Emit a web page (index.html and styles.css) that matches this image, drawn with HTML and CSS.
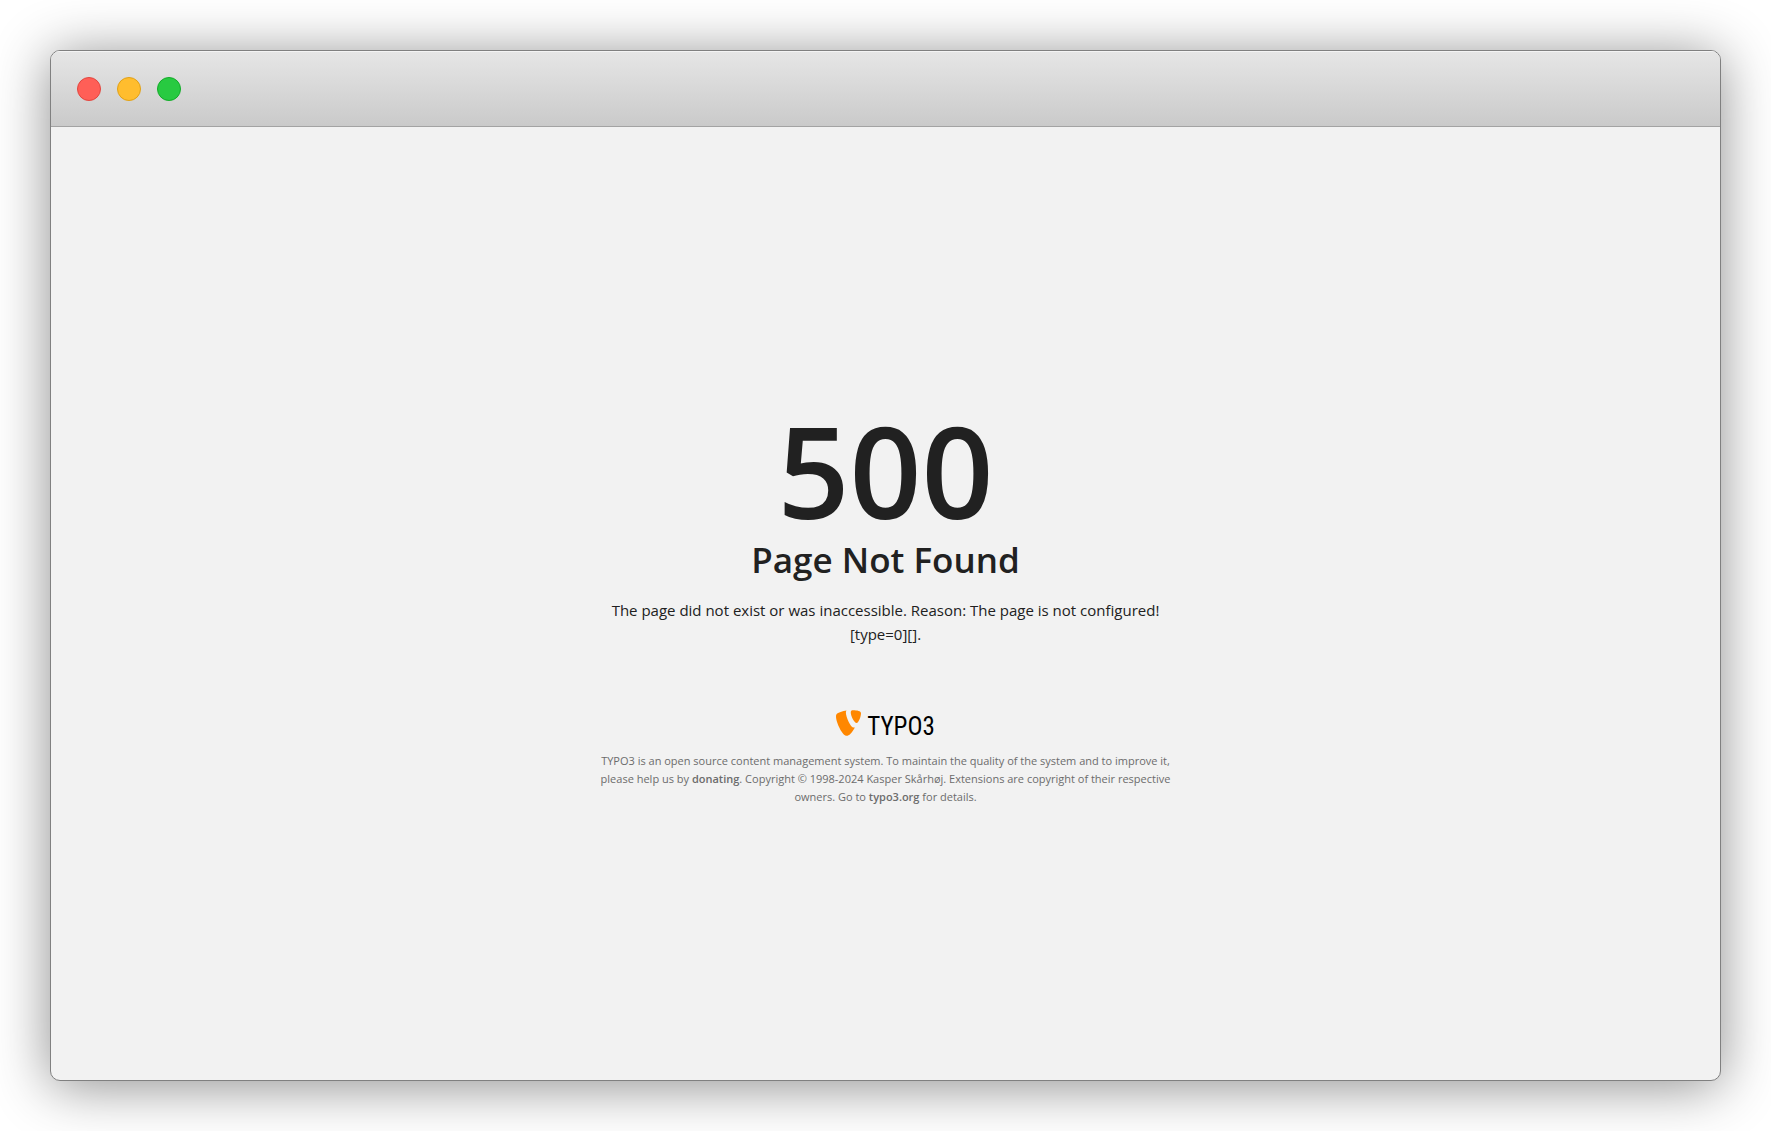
FILE: index.html
```html
<!DOCTYPE html>
<html lang="en">
<head>
    <meta charset="UTF-8">
    <meta name="viewport" content="width=device-width, initial-scale=1.0">
    <title>Page Not Found</title>
    <link rel="stylesheet" href="styles.css">
</head>
<body>

<div class="window">
    <!-- Title bar with the window controls -->
    <header class="titlebar">
        <button type="button" class="control close" aria-label="Close"></button>
        <button type="button" class="control minimize" aria-label="Minimize"></button>
        <button type="button" class="control zoom" aria-label="Zoom"></button>
    </header>

    <main class="page">
        <div class="error">
            <div class="error-code">500</div>
            <h1 class="error-title">Page Not Found</h1>
            <p class="error-message">The page did not exist or was inaccessible. Reason: The page is not configured! [type=0][].</p>

            <footer class="footer">
                <div class="logo">
                    <svg class="logo-mark" viewBox="0.6 0.7 13.9 14.3" aria-hidden="true">
                        <path fill="#ff8700" d="M11.1 10.3c-.2 0-.4.1-.6.1-1.8 0-4.4-6.2-4.4-8.3 0-.8.2-1 .4-1.2-2.2.3-4.8 1.1-5.6 2.1-.2.2-.3.6-.3 1.2C.6 7.4 4.1 15 6.6 15c1.1 0 3-1.8 4.5-4.7M10.1.7c2.2 0 4.4.4 4.4 1.6 0 2.5-1.6 5.6-2.4 5.6-1.4 0-3.3-4-3.3-6 0-.9.4-1.2 1.3-1.2"/>
                    </svg>
                    <span class="logo-name">TYPO3</span>
                </div>
                <p class="footer-text">TYPO3 is an open source content management system. To maintain the quality of the system and to improve it, please help us by <a href="#donate">donating</a>. Copyright © 1998-2024 Kasper Skårhøj. Extensions are copyright of their respective owners. Go to <a href="#typo3">typo3.org</a> for details.</p>
            </footer>
        </div>
    </main>
</div>

</body>
</html>
```
FILE: styles.css
```css
* {
    box-sizing: border-box;
}

body {
    margin: 0;
    padding: 50px;
    min-height: 100vh;
    display: flex;
    background: #fff;
    color: #212121;
    font-family: "Segoe UI", "Open Sans", sans-serif;
}

/* Window frame */
.window {
    flex: 1;
    display: flex;
    flex-direction: column;
    border: 1px solid #808080;
    border-radius: 10px;
    background: #f2f2f2;
    overflow: hidden;
    box-shadow: 0 5px 55px rgba(0, 0, 0, 0.45);
}

.titlebar {
    display: flex;
    align-items: center;
    gap: 16px;
    height: 76px;
    padding: 0 26px;
    background: linear-gradient(#e6e6e6, #cacaca);
    border-bottom: 1px solid #a3a3a3;
    box-shadow: inset 0 1px #f4f4f4;
}

.control {
    width: 24px;
    height: 24px;
    padding: 0;
    border: 1px solid;
    border-radius: 50%;
}

.close {
    background: #ff5f57;
    border-color: #e2463f;
}

.minimize {
    background: #ffbd2e;
    border-color: #e1a116;
}

.zoom {
    background: #28ca41;
    border-color: #12ac28;
}

/* Error message */
.page {
    flex: 1;
    display: flex;
    align-items: center;
    justify-content: center;
    padding: 24px 20px 20px;
}

.error {
    max-width: 600px;
    text-align: center;
}

.error-code {
    font-size: 126px;
    font-weight: 600;
    line-height: 128px;
}

.error-title {
    margin: 4px 0 16px;
    font-size: 35px;
    font-weight: 600;
    line-height: 44px;
}

.error-message {
    margin: 0;
    font-size: 15px;
    line-height: 24px;
}

/* Footer */
.footer {
    margin-top: 64px;
    color: #6c6c6c;
}

.logo {
    display: flex;
    justify-content: center;
    gap: 6px;
    margin-bottom: 16px;
    color: #000;
}

.logo-mark {
    width: 25px;
    height: 26px;
}

.logo-name {
    font-family: "Roboto Condensed", "Open Sans Condensed", sans-serif;
    font-size: 25px;
    line-height: 34px;
    height: 26px;
}

.footer-text {
    margin: 0;
    font-size: 11px;
    line-height: 18px;
}

.footer-text a {
    color: inherit;
    font-weight: 600;
    text-decoration: none;
}
```
